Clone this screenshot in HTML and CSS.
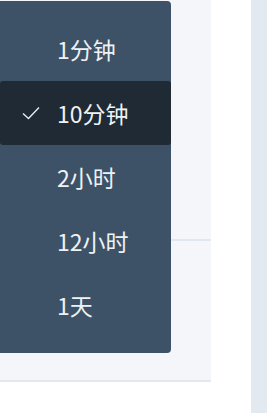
FILE: index.html
```html
<!DOCTYPE html>
<html lang="zh-CN">
<head>
  <meta charset="UTF-8" />
  <meta name="viewport" content="width=device-width, initial-scale=1.0"/>
  <title>时间范围</title>
  <link rel="stylesheet" href="styles.css">
</head>
<body>
  <div class="layout">
    <div class="main">
      <div class="panel">
        <div class="panel-top"></div>
        <div class="panel-bottom"></div>
      </div>
      <div class="below"></div>
    </div>
    <div class="gutter"></div>
    <div class="side"></div>
  </div>

  <ul class="menu">
    <li class="item">1分钟</li>
    <li class="item selected">
      <svg class="check" width="18" height="14" viewBox="0 0 18 14">
        <path d="M1 7.5 L6.5 12.5 L17 1.5" fill="none" stroke="#e6ebf0" stroke-width="1.4"/>
      </svg>
      10分钟
    </li>
    <li class="item">2小时</li>
    <li class="item">12小时</li>
    <li class="item">1天</li>
  </ul>
</body>
</html>
```

FILE: styles.css
```css
body {
  margin: 0;
  font-family: "Noto Sans CJK SC", "Noto Sans", sans-serif;
  background: #ffffff;
}

.layout {
  display: flex;
  height: 413px;
}

.main {
  width: 211px;
  display: flex;
  flex-direction: column;
}

.panel {
  background: #f4f6fa;
  height: 380px;
  border-bottom: 2px solid #e3e8ee;
  display: flex;
  flex-direction: column;
}

.panel-top {
  height: 239px;
  border-bottom: 2px solid #e1e7ee;
}

.gutter {
  width: 40px;
  background: #ffffff;
}

.side {
  flex: 1;
  background: #e3e9f1;
}

.menu {
  position: absolute;
  top: 1px;
  left: 0;
  width: 171px;
  margin: 0;
  padding: 16px 0;
  list-style: none;
  background: #3d5266;
  border-radius: 0 4px 4px 0;
}

.item {
  position: relative;
  height: 64px;
  line-height: 64px;
  padding-left: 57px;
  font-size: 23px;
  color: #eef2f6;
}

.item.selected {
  background: #1f2a34;
  border-radius: 3px;
}

.check {
  position: absolute;
  left: 22px;
  top: 25px;
}
```
